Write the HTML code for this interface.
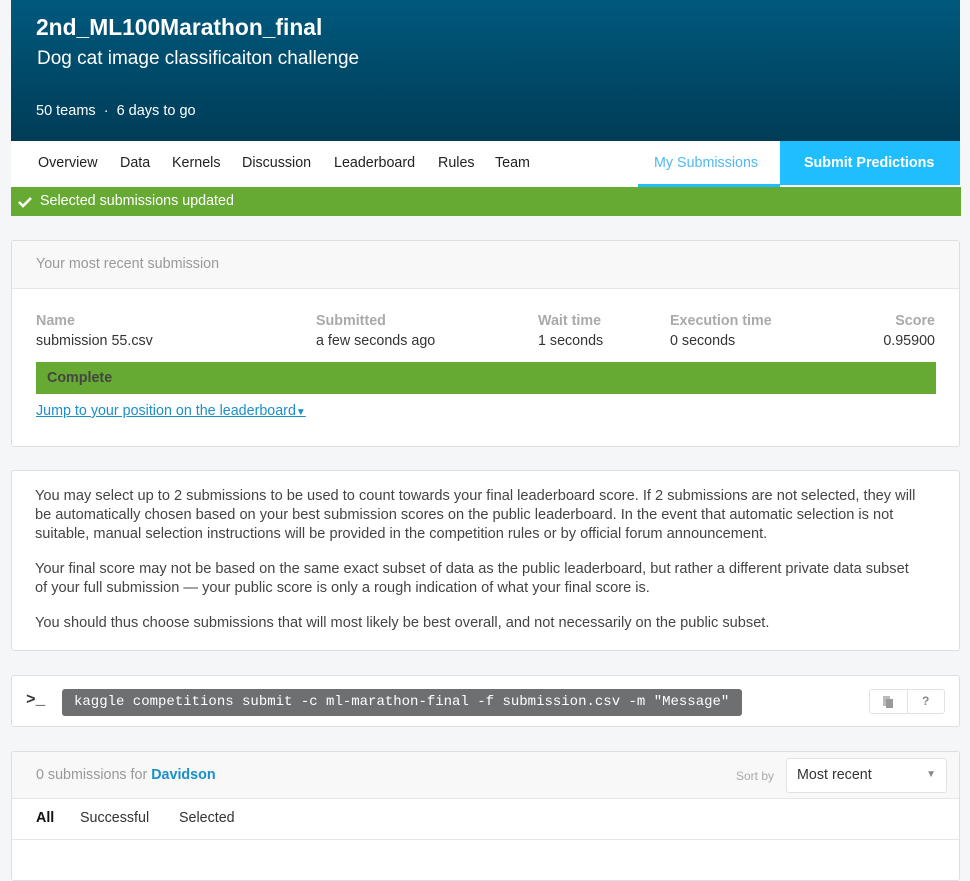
<!DOCTYPE html>
<html><head><style>
*{box-sizing:border-box;margin:0;padding:0}
body{width:970px;height:866px;background:#f4f6f7;font-family:"Liberation Sans",sans-serif;position:relative;overflow:hidden;color:#333}
.a{position:absolute}
.card{position:absolute;left:11px;width:949px;background:#fff;border:1px solid #dcdfe1;border-radius:3px}
.hdr{left:11px;top:0;width:949px;height:141px;background:linear-gradient(#00597d,#003c57)}
.nav{left:11px;top:141px;width:949px;height:46px;background:#fff}
.nav span{position:absolute;top:14px;font-size:14.3px;color:#222}
.lbl{font-size:14.3px;color:#aaa;font-weight:bold}
.val{font-size:14.3px;color:#333}
p{font-size:14.6px;color:#444;line-height:19px}
</style></head><body>
<div class="a hdr">
<div class="a" style="left:25px;top:14px;font-size:22.8px;font-weight:bold;color:#fff">2nd_ML100Marathon_final</div>
<div class="a" style="left:26px;top:48px;font-size:19px;color:#fff">Dog cat image classificaiton challenge</div>
<div class="a" style="left:25px;top:103px;font-size:14.5px;color:#fff">50 teams &nbsp;·&nbsp; 6 days to go</div>
</div>
<div class="a nav">
<span style="left:27px">Overview</span><span style="left:109px">Data</span><span style="left:161px">Kernels</span><span style="left:231px">Discussion</span><span style="left:323px">Leaderboard</span><span style="left:427px">Rules</span><span style="left:484px">Team</span>
<div class="a" style="left:627px;top:0;width:142px;height:46px;border-bottom:3px solid #20beff"><span style="left:16px;color:#4fb8f0">My Submissions</span></div>
<div class="a" style="left:769px;top:0;width:180px;height:44px;background:#20beff"><span style="left:24px;color:#fff;font-weight:bold">Submit Predictions</span></div>
</div>
<div class="a" style="left:11px;top:187px;width:950px;height:29px;background:#66aa33;color:#fff;font-size:14.3px;padding:6px 0 0 29px">Selected submissions updated
<svg class="a" style="left:7px;top:9px" width="14" height="12" viewBox="0 0 14 12"><path d="M1 6l4 4 8-8" stroke="#fff" stroke-width="2.6" fill="none"/></svg></div>

<div class="card" style="top:240px;height:207px">
<div class="a" style="left:0;top:0;width:947px;height:48px;background:#f8f8f8;border-bottom:1px solid #e4e6e8"></div>
<div class="a" style="left:24px;top:15px;font-size:14.3px;color:#999">Your most recent submission</div>
<div class="a lbl" style="left:24px;top:72px">Name</div><div class="a val" style="left:24px;top:92px">submission 55.csv</div>
<div class="a lbl" style="left:304px;top:72px">Submitted</div><div class="a val" style="left:304px;top:92px">a few seconds ago</div>
<div class="a lbl" style="left:526px;top:72px">Wait time</div><div class="a val" style="left:526px;top:92px">1 seconds</div>
<div class="a lbl" style="left:658px;top:72px">Execution time</div><div class="a val" style="left:658px;top:92px">0 seconds</div>
<div class="a lbl" style="right:24px;top:72px">Score</div><div class="a val" style="right:24px;top:92px">0.95900</div>
<div class="a" style="left:24px;top:121px;width:900px;height:32px;background:#66aa33;font-size:14.3px;font-weight:bold;color:#444;padding:8px 11px">Complete</div>
<div class="a" style="left:24px;top:162px;font-size:14.3px;color:#1a8fc9;text-decoration:underline">Jump to your position on the leaderboard<span style="font-size:10px;text-decoration:none">▼</span></div>
</div>

<div class="card" style="top:470px;height:181px;padding:16px 36px 16px 23px">
<p>You may select up to 2 submissions to be used to count towards your final leaderboard score. If 2 submissions are not selected, they will be automatically chosen based on your best submission scores on the public leaderboard. In the event that automatic selection is not suitable, manual selection instructions will be provided in the competition rules or by official forum announcement.</p>
<p style="margin-top:16px">Your final score may not be based on the same exact subset of data as the public leaderboard, but rather a different private data subset of your full submission — your public score is only a rough indication of what your final score is.</p>
<p style="margin-top:16px">You should thus choose submissions that will most likely be best overall, and not necessarily on the public subset.</p>
</div>

<div class="card" style="top:675px;height:52px">
<div class="a" style="left:14px;top:15px;font-size:16px;color:#333;font-family:'Liberation Mono',monospace;font-weight:bold">&gt;_</div>
<div class="a" style="left:50px;top:13px;width:680px;height:27px;background:#6e6f71;border-radius:3px;color:#fff;font-family:'Liberation Mono',monospace;font-size:14px;padding:5px 12px">kaggle competitions submit -c ml-marathon-final -f submission.csv -m "Message"</div>
<div class="a" style="left:857px;top:13px;width:76px;height:25px;border:1px solid #e2e2e2;border-radius:3px"><div class="a" style="left:37px;top:0;width:1px;height:23px;background:#e2e2e2"></div>
<svg class="a" style="left:12px;top:5px" width="12" height="14"><rect x="1" y="1" width="7" height="10" fill="#bbb"/><rect x="4" y="4" width="7" height="9" fill="#999"/></svg>
<div class="a" style="left:52px;top:4px;font-size:12px;font-weight:bold;color:#888">?</div></div>
</div>

<div class="card" style="top:751px;height:130px">
<div class="a" style="left:0;top:0;width:947px;height:47px;background:#f8f8f8;border-bottom:1px solid #e4e6e8"></div>
<div class="a" style="left:24px;top:15px;font-size:14.3px;color:#999">0 submissions for <span style="color:#1a8fc9;font-weight:bold">Davidson</span></div>
<div class="a" style="left:724px;top:17px;font-size:12px;color:#aaa">Sort by</div>
<div class="a" style="left:774px;top:6px;width:161px;height:35px;background:#fff;border:1px solid #e2e2e2;border-radius:3px;font-size:14.3px;color:#333;padding:8px 10px">Most recent<span class="a" style="right:10px;top:10px;font-size:10px;color:#888">▼</span></div>
<div class="a" style="left:24px;top:58px;font-size:14.3px;color:#111;font-weight:bold">All</div>
<div class="a" style="left:68px;top:58px;font-size:14.3px;color:#333">Successful</div>
<div class="a" style="left:167px;top:58px;font-size:14.3px;color:#333">Selected</div>
<div class="a" style="left:0;top:87px;width:947px;height:1px;background:#e4e6e8"></div>
</div>
</body></html>
